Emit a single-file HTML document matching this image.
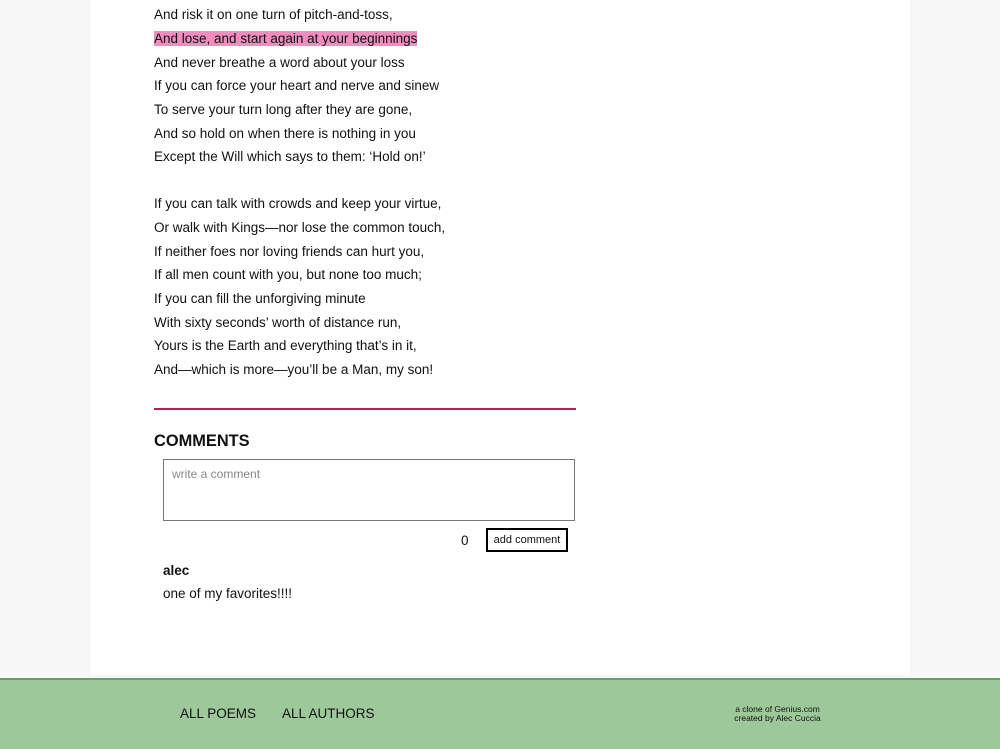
<!DOCTYPE html>
<html><head><style>
body{margin:0;width:1000px;height:749px;background:#f7f7f7;font-family:"Liberation Sans",sans-serif;position:relative;overflow:hidden;color:#111}
.col{position:absolute;left:91px;top:0;width:819px;height:675px;background:#fff}
.l{position:absolute;left:154px;font-size:13.5px;line-height:18px;white-space:nowrap;margin-top:1px}
.hl{background:#f08cbf}
.rule{position:absolute;left:154px;top:408px;width:422px;height:2px;background:#c8174f}
.h{position:absolute;left:154px;top:432px;font-size:16.4px;font-weight:bold}
.ta{position:absolute;left:163px;top:459px;width:410px;height:60px;border:1px solid #777;font-size:12px;color:#888}
.ta span{position:absolute;left:8px;top:7px}
.btn{position:absolute;left:486px;top:528px;width:78px;height:20px;border:2px solid #000;font-size:11px;display:flex;align-items:center;justify-content:center}
.foot{position:absolute;left:0;top:678px;width:1000px;height:71px;background:#9dc89a;border-top:2px solid #6a9e67;box-sizing:border-box}
.nav{position:absolute;top:26px;font-size:13.5px;color:#111}
.cr{position:absolute;left:715px;top:25px;width:125px;text-align:center;font-size:8.5px;line-height:9px}
</style></head><body>
<div class="col"></div>
<div class="l" style="top:5px">And risk it on one turn of pitch-and-toss,</div>
<div class="l" style="top:29px"><span class="hl">And lose, and start again at your beginnings</span></div>
<div class="l" style="top:53px">And never breathe a word about your loss</div>
<div class="l" style="top:76px">If you can force your heart and nerve and sinew</div>
<div class="l" style="top:100px">To serve your turn long after they are gone,</div>
<div class="l" style="top:124px">And so hold on when there is nothing in you</div>
<div class="l" style="top:147px">Except the Will which says to them: ‘Hold on!’</div>
<div class="l" style="top:194px">If you can talk with crowds and keep your virtue,</div>
<div class="l" style="top:218px">Or walk with Kings—nor lose the common touch,</div>
<div class="l" style="top:242px">If neither foes nor loving friends can hurt you,</div>
<div class="l" style="top:265px">If all men count with you, but none too much;</div>
<div class="l" style="top:289px">If you can fill the unforgiving minute</div>
<div class="l" style="top:313px">With sixty seconds’ worth of distance run,</div>
<div class="l" style="top:336px">Yours is the Earth and everything that’s in it,</div>
<div class="l" style="top:360px">And—which is more—you’ll be a Man, my son!</div>
<div class="rule"></div>
<div class="h">COMMENTS</div>
<div class="ta"><span>write a comment</span></div>
<div class="l" style="left:461px;top:531px">0</div>
<div class="btn">add comment</div>
<div class="l" style="left:163px;top:561px;font-weight:bold">alec</div>
<div class="l" style="left:163px;top:584px">one of my favorites!!!!</div>
<div class="foot">
<div class="nav" style="left:180px">ALL POEMS</div>
<div class="nav" style="left:282px">ALL AUTHORS</div>
<div class="cr">a clone of Genius.com<br>created by Alec Cuccia</div>
</div>
</body></html>
